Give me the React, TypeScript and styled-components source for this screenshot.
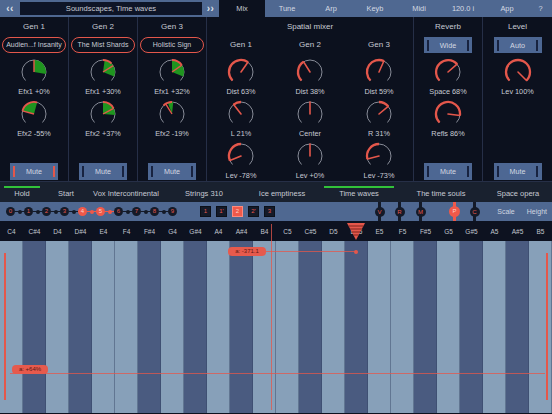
import React from 'react';
import styled, { createGlobalStyle } from 'styled-components';

const RED = '#e4574b';
const GREEN = '#1f951f';
const TEXT = '#c7cad3';
const PANEL = '#0c111e';
const BAR = '#4f6891';
const LINE = '#262f47';
const RING = '#878b97';

const GlobalStyle = createGlobalStyle`
  html, body { margin: 0; padding: 0; background: ${PANEL}; }
  body { font-family: "Liberation Sans", Arial, sans-serif; color: ${TEXT}; }
  * { box-sizing: border-box; }
`;

const Screen = styled.div`
  width: 552px;
  height: 414px;
  overflow: hidden;
  display: flex;
  flex-direction: column;
  background: ${PANEL};
`;

/* ---------- top bar ---------- */

const TopBar = styled.div`
  height: 17px;
  display: flex;
  background: ${BAR};
  font-size: 7.4px;
`;

const NavArrow = styled.div<{ $w: number }>`
  width: ${p => p.$w}px;
  display: flex;
  align-items: center;
  justify-content: center;
  font-size: 10px;
  font-weight: bold;
  letter-spacing: 0.5px;
  color: #dfe3ea;
`;

const TitleBox = styled.div`
  width: 182px;
  height: 13px;
  margin-top: 2px;
  background: #0e1527;
  display: flex;
  align-items: center;
  justify-content: center;
  font-size: 7.6px;
`;

const TopTab = styled.div<{ $w: number; $active?: boolean }>`
  width: ${p => p.$w}px;
  display: flex;
  align-items: center;
  justify-content: center;
  background: ${p => (p.$active ? PANEL : 'transparent')};
  color: ${p => (p.$active ? TEXT : '#d5dae3')};
`;

/* ---------- mixer panel ---------- */

const Panel = styled.div`
  height: 165px;
  display: flex;
  border-bottom: 1px solid ${LINE};
`;

const Column = styled.div<{ $w: number; $last?: boolean }>`
  width: ${p => p.$w}px;
  border-right: ${p => (p.$last ? 'none' : `1px solid ${LINE}`)};
  display: flex;
  flex-direction: column;
  align-items: center;
  padding: 4px 0 1px;
`;

const Header = styled.div`
  font-size: 8px;
  line-height: 12px;
  white-space: nowrap;
`;

const SubGrid = styled.div`
  display: grid;
  grid-template-columns: repeat(3, 69px);
  margin-top: 6px;
`;

const SubColumn = styled.div`
  display: flex;
  flex-direction: column;
  align-items: center;
`;

const Pill = styled.div`
  width: 64px;
  height: 16px;
  margin-top: 4px;
  border: 1px solid ${RED};
  border-radius: 8px;
  font-size: 7px;
  line-height: 14px;
  text-align: center;
  white-space: nowrap;
  overflow: hidden;
`;

const ToggleButton = styled.div<{ $top?: number; $auto?: boolean }>`
  width: 48px;
  height: ${p => (p.$auto ? 17 : 16)}px;
  margin-top: ${p => (p.$auto ? 'auto' : `${p.$top ?? 4}px`)};
  background: #4d6793;
  display: flex;
  align-items: center;
  justify-content: space-between;
  padding: 0 3px;
  font-size: 7.2px;
  color: #d4d9e2;
`;

const ButtonBar = styled.span<{ $on?: boolean }>`
  width: 2px;
  height: 11px;
  background: ${p => (p.$on ? RED : '#182340')};
`;

const KnobBlock = styled.div<{ $top: number }>`
  display: flex;
  flex-direction: column;
  align-items: center;
  margin-top: ${p => p.$top}px;
`;

const KnobSvg = styled.svg`
  display: block;
  width: 30px;
  height: 28px;
`;

const KnobLabel = styled.div`
  font-size: 7.3px;
  line-height: 12px;
  white-space: nowrap;
`;

const pt = (a: number, r: number) => {
  const rad = (a * Math.PI) / 180;
  return [15 + r * Math.sin(rad), 14 - r * Math.cos(rad)];
};

const arc = (a0: number, a1: number, r: number) => {
  const [x0, y0] = pt(a0, r);
  const [x1, y1] = pt(a1, r);
  const large = a1 - a0 > 180 ? 1 : 0;
  return `M${x0.toFixed(2)} ${y0.toFixed(2)} A${r} ${r} 0 ${large} 1 ${x1.toFixed(2)} ${y1.toFixed(2)}`;
};

const wedge = (a0: number, a1: number, r: number) => {
  const [x0, y0] = pt(a0, r);
  const [x1, y1] = pt(a1, r);
  const large = a1 - a0 > 180 ? 1 : 0;
  return `M15 14 L${x0.toFixed(2)} ${y0.toFixed(2)} A${r} ${r} 0 ${large} 1 ${x1.toFixed(2)} ${y1.toFixed(2)} Z`;
};

type GenKnobData = { label: string; w: [number, number]; red?: [number, number]; line: number };
type MixKnobData = { label: string; red?: [number, number]; line: number };

const GenKnob: React.FC<{ k: GenKnobData; top: number }> = ({ k, top }) => {
  const [lx, ly] = pt(k.line, 12);
  return (
    <KnobBlock $top={top}>
      <KnobSvg viewBox="0 0 30 28">
        <path d={arc(-135, 135, 12)} stroke={RING} strokeWidth={1} fill="none" />
        <path d={wedge(k.w[0], k.w[1], 12)} fill={GREEN} />
        {k.red && <path d={arc(k.red[0], k.red[1], 12)} stroke={RED} strokeWidth={1.8} fill="none" />}
        <line x1={15} y1={14} x2={lx} y2={ly} stroke={RED} strokeWidth={1.4} />
      </KnobSvg>
      <KnobLabel>{k.label}</KnobLabel>
    </KnobBlock>
  );
};

const MixKnob: React.FC<{ k: MixKnobData; top: number }> = ({ k, top }) => {
  const [lx, ly] = pt(k.line, 12);
  return (
    <KnobBlock $top={top}>
      <KnobSvg viewBox="0 0 30 28">
        <path d={arc(-135, 135, 12)} stroke={RING} strokeWidth={1} fill="none" />
        {k.red && <path d={arc(k.red[0], k.red[1], 12)} stroke={RED} strokeWidth={2.3} fill="none" />}
        <line x1={15} y1={14} x2={lx} y2={ly} stroke={RED} strokeWidth={1.6} strokeLinecap="round" />
      </KnobSvg>
      <KnobLabel>{k.label}</KnobLabel>
    </KnobBlock>
  );
};

const genCols: { name: string; preset: string; muteOn?: boolean; knobs: GenKnobData[] }[] = [
  {
    name: 'Gen 1',
    preset: 'Audien...f Insanity',
    muteOn: true,
    knobs: [
      { label: 'Efx1 +0%', w: [0, 100], line: 0 },
      { label: 'Efx2 -55%', w: [-75, 15], red: [-75, 15], line: -75 },
    ],
  },
  {
    name: 'Gen 2',
    preset: 'The Mist Shards',
    knobs: [
      { label: 'Efx1 +30%', w: [8, 112], red: [0, 45], line: 58 },
      { label: 'Efx2 +37%', w: [0, 95], red: [0, 62], line: 62 },
    ],
  },
  {
    name: 'Gen 3',
    preset: 'Holistic Sign',
    knobs: [
      { label: 'Efx1 +32%', w: [0, 112], red: [0, 55], line: 55 },
      { label: 'Efx2 -19%', w: [-20, 6], red: [-45, 0], line: -32 },
    ],
  },
];

const mixCols: { name: string; knobs: MixKnobData[] }[] = [
  {
    name: 'Gen 1',
    knobs: [
      { label: 'Dist 63%', red: [-135, 35], line: 35 },
      { label: 'L 21%', red: [-38, 0], line: -38 },
      { label: 'Lev -78%', red: [-112, 0], line: -112 },
    ],
  },
  {
    name: 'Gen 2',
    knobs: [
      { label: 'Dist 38%', red: [-135, -32], line: -32 },
      { label: 'Center', line: 0 },
      { label: 'Lev +0%', line: 0 },
    ],
  },
  {
    name: 'Gen 3',
    knobs: [
      { label: 'Dist 59%', red: [-135, 24], line: 24 },
      { label: 'R 31%', red: [0, 50], line: 50 },
      { label: 'Lev -73%', red: [-104, 0], line: -104 },
    ],
  },
];

/* ---------- preset tabs ---------- */

const TabBar = styled.div`
  height: 20px;
  display: flex;
  background: #19212f;
`;

const Tab = styled.div<{ $w: number }>`
  width: ${p => p.$w}px;
  padding: 4px 4px 0;
`;

const TabLabel = styled.div<{ $active?: boolean }>`
  border-top: 2px solid ${p => (p.$active ? '#32c23a' : 'transparent')};
  font-size: 7.5px;
  line-height: 12px;
  text-align: center;
  white-space: nowrap;
`;

/* ---------- marker row ---------- */

const MarkerRow = styled.div`
  height: 19px;
  display: flex;
  align-items: center;
  background: ${BAR};
  padding-left: 6px;
`;

const Node = styled.div<{ $on?: boolean }>`
  width: 9px;
  height: 9px;
  border-radius: 50%;
  background: ${p => (p.$on ? '#f0594a' : '#141a28')};
  color: ${p => (p.$on ? '#ffd2c9' : RED)};
  font-size: 6px;
  line-height: 9px;
  text-align: center;
`;

const Link = styled.div<{ $on?: boolean }>`
  width: 9px;
  height: 9px;
  display: flex;
  align-items: center;
  justify-content: center;
  background: linear-gradient(${p => (p.$on ? '#f0594a' : '#141a28')}, ${p => (p.$on ? '#f0594a' : '#141a28')}) center / 100% 1px no-repeat;

  &::after {
    content: '';
    width: 4px;
    height: 4px;
    border-radius: 50%;
    background: ${p => (p.$on ? '#f0594a' : '#141a28')};
  }
`;

const BoxGroup = styled.div`
  display: flex;
  gap: 5px;
  margin-left: 23px;
`;

const SlotBox = styled.div<{ $on?: boolean }>`
  width: 11px;
  height: 11px;
  background: ${p => (p.$on ? '#f0594a' : '#141a28')};
  border: 1px solid ${p => (p.$on ? '#ff8a7c' : '#0b0f18')};
  color: ${p => (p.$on ? '#ffd2c9' : RED)};
  font-size: 6px;
  line-height: 9px;
  text-align: center;
`;

const Pin = styled.div<{ $left: number; $on?: boolean }>`
  width: 11px;
  height: 19px;
  margin-left: ${p => p.$left}px;
  display: flex;
  align-items: center;
  justify-content: center;
  background: linear-gradient(${p => (p.$on ? '#f0594a' : '#141a28')}, ${p => (p.$on ? '#f0594a' : '#141a28')}) center / 3px 100% no-repeat;
`;

const PinHead = styled.div<{ $on?: boolean }>`
  width: ${p => (p.$on ? 11 : 10)}px;
  height: ${p => (p.$on ? 11 : 10)}px;
  border-radius: 50%;
  background: ${p => (p.$on ? '#f0594a' : '#141a28')};
  color: ${p => (p.$on ? '#ffd2c9' : RED)};
  font-size: 6px;
  line-height: ${p => (p.$on ? 11 : 10)}px;
  text-align: center;
`;

const RowLinks = styled.div`
  margin-left: auto;
  display: flex;
  gap: 12px;
  padding-right: 5px;
  font-size: 7px;
  color: #d0d6e0;
`;

/* ---------- keyboard ---------- */

const KeyArea = styled.div`
  position: relative;
  display: flex;
  flex-direction: column;
`;

const NoteRow = styled.div`
  height: 20px;
  display: grid;
  grid-template-columns: repeat(24, 23px);
  background: #0d1220;
  align-items: center;
`;

const NoteLabel = styled.div`
  font-size: 6.5px;
  text-align: center;
  color: #c2c6cf;
`;

const Keys = styled.div`
  height: 172px;
  display: flex;
`;

const Key = styled.div<{ $dark: boolean }>`
  width: 23px;
  background: ${p => (p.$dark ? '#4a5b80' : '#87a0b9')};
  box-shadow: inset -1px 0 rgba(50, 66, 100, 0.45);
`;

const Cursor = styled.div<{ $x: number; $y: number; $w: number; $h: number; $strong?: boolean }>`
  position: absolute;
  left: ${p => p.$x}px;
  top: ${p => p.$y}px;
  width: ${p => p.$w}px;
  height: ${p => p.$h}px;
  background: ${p => (p.$strong ? RED : 'rgba(228, 87, 75, 0.75)')};
`;

const Dot = styled.div<{ $x: number; $y: number }>`
  position: absolute;
  left: ${p => p.$x - 2}px;
  top: ${p => p.$y - 2}px;
  width: 4px;
  height: 4px;
  border-radius: 50%;
  background: ${RED};
`;

const ValueTag = styled.div<{ $x: number; $y: number; $w: number }>`
  position: absolute;
  left: ${p => p.$x}px;
  top: ${p => p.$y}px;
  width: ${p => p.$w}px;
  height: 9px;
  border-radius: 4px;
  background: #e65a4d;
  color: #5a1813;
  font-size: 6px;
  line-height: 9px;
  text-align: center;
  white-space: nowrap;
`;

const Marker = styled.svg`
  position: absolute;
  left: 347px;
  top: 2px;
  width: 18px;
  height: 17px;
`;

const topTabs = [
  { label: 'Tune', w: 44 },
  { label: 'Arp', w: 44 },
  { label: 'Keyb', w: 44 },
  { label: 'Midi', w: 44 },
  { label: '120.0 i', w: 44 },
  { label: 'App', w: 44 },
  { label: '?', w: 23 },
];

const presetTabs = [
  { label: 'Hold', w: 44, active: true },
  { label: 'Start', w: 44 },
  { label: 'Vox Intercontinental', w: 76 },
  { label: 'Strings 310', w: 80 },
  { label: 'Ice emptiness', w: 76 },
  { label: 'Time waves', w: 78, active: true },
  { label: 'The time souls', w: 86 },
  { label: 'Space opera', w: 68 },
];

const pins = [
  { label: 'V', left: 99 },
  { label: 'R', left: 9 },
  { label: 'M', left: 10 },
  { label: 'P', left: 23, on: true },
  { label: 'C', left: 9 },
];

const notes = ['C', 'C#', 'D', 'D#', 'E', 'F', 'F#', 'G', 'G#', 'A', 'A#', 'B'];
const keyNames = [4, 5].flatMap(o => notes.map(n => `${n}${o}`));

const stripes = [3, 6, 9, 12];

const App: React.FC = () => (
  <Screen>
    <GlobalStyle />
    <TopBar>
      <NavArrow $w={20}>‹‹</NavArrow>
      <TitleBox>Soundscapes, Time waves</TitleBox>
      <NavArrow $w={17}>››</NavArrow>
      <TopTab $w={46} $active>Mix</TopTab>
      {topTabs.map(t => (
        <TopTab key={t.label} $w={t.w}>{t.label}</TopTab>
      ))}
    </TopBar>

    <Panel>
      {genCols.map(col => (
        <Column key={col.name} $w={69}>
          <Header>{col.name}</Header>
          <Pill>{col.preset}</Pill>
          <GenKnob k={col.knobs[0]} top={5} />
          <GenKnob k={col.knobs[1]} top={2} />
          <ToggleButton $auto>
            <ButtonBar $on={col.muteOn} />
            Mute
            <ButtonBar $on={col.muteOn} />
          </ToggleButton>
        </Column>
      ))}
      <Column $w={207}>
        <Header>Spatial mixer</Header>
        <SubGrid>
          {mixCols.map(col => (
            <SubColumn key={col.name}>
              <Header>{col.name}</Header>
              {col.knobs.map((k, i) => (
                <MixKnob key={k.label} k={k} top={i === 0 ? 7 : 2} />
              ))}
            </SubColumn>
          ))}
        </SubGrid>
      </Column>
      <Column $w={69}>
        <Header>Reverb</Header>
        <ToggleButton>
          <ButtonBar />
          Wide
          <ButtonBar />
        </ToggleButton>
        <MixKnob k={{ label: 'Space 68%', red: [-135, 49], line: 49 }} top={5} />
        <MixKnob k={{ label: 'Refls 86%', red: [-135, 97], line: 97 }} top={2} />
        <ToggleButton $auto>
          <ButtonBar />
          Mute
          <ButtonBar />
        </ToggleButton>
      </Column>
      <Column $w={69} $last>
        <Header>Level</Header>
        <ToggleButton>
          <ButtonBar />
          Auto
          <ButtonBar />
        </ToggleButton>
        <MixKnob k={{ label: 'Lev 100%', red: [-135, 135], line: 135 }} top={5} />
        <ToggleButton $auto>
          <ButtonBar />
          Mute
          <ButtonBar />
        </ToggleButton>
      </Column>
    </Panel>

    <TabBar>
      {presetTabs.map(t => (
        <Tab key={t.label} $w={t.w}>
          <TabLabel $active={t.active}>{t.label}</TabLabel>
        </Tab>
      ))}
    </TabBar>

    <MarkerRow>
      {Array.from({ length: 10 }).map((_, i) => (
        <React.Fragment key={i}>
          {i > 0 && <Link $on={i === 5 || i === 6} />}
          <Node $on={i === 4 || i === 5}>{i}</Node>
        </React.Fragment>
      ))}
      <BoxGroup>
        {['1', "1'", '2', "2'", '3'].map(b => (
          <SlotBox key={b} $on={b === '2'}>{b}</SlotBox>
        ))}
      </BoxGroup>
      {pins.map(p => (
        <Pin key={p.label} $left={p.left} $on={p.on}>
          <PinHead $on={p.on}>{p.label}</PinHead>
        </Pin>
      ))}
      <RowLinks>
        <span>Scale</span>
        <span>Height</span>
      </RowLinks>
    </MarkerRow>

    <KeyArea>
      <NoteRow>
        {keyNames.map(n => (
          <NoteLabel key={n}>{n}</NoteLabel>
        ))}
      </NoteRow>
      <Keys>
        {keyNames.map(n => (
          <Key key={n} $dark={n.includes('#')} />
        ))}
      </Keys>

      <Marker viewBox="0 0 18 17">
        <polygon points="0,0 18,0 9,17" fill={RED} />
        {stripes.map(y => {
          const hw = 9 * (1 - y / 17);
          return <line key={y} x1={9 - hw} x2={9 + hw} y1={y} y2={y} stroke="#7a241d" strokeWidth={1} />;
        })}
      </Marker>

      <Cursor $x={271} $y={3} $w={1} $h={186} />
      <Cursor $x={228} $y={30} $w={128} $h={1} />
      <Dot $x={356} $y={30.5} />
      <ValueTag $x={228} $y={26} $w={38}>a: -371.1</ValueTag>

      <Cursor $x={4} $y={32} $w={2} $h={147} $strong />
      <Cursor $x={546} $y={32} $w={2} $h={147} $strong />
      <Cursor $x={10} $y={152} $w={535} $h={1} />
      <ValueTag $x={12} $y={144} $w={36}>a: +64%</ValueTag>
    </KeyArea>
  </Screen>
);

export default App;
